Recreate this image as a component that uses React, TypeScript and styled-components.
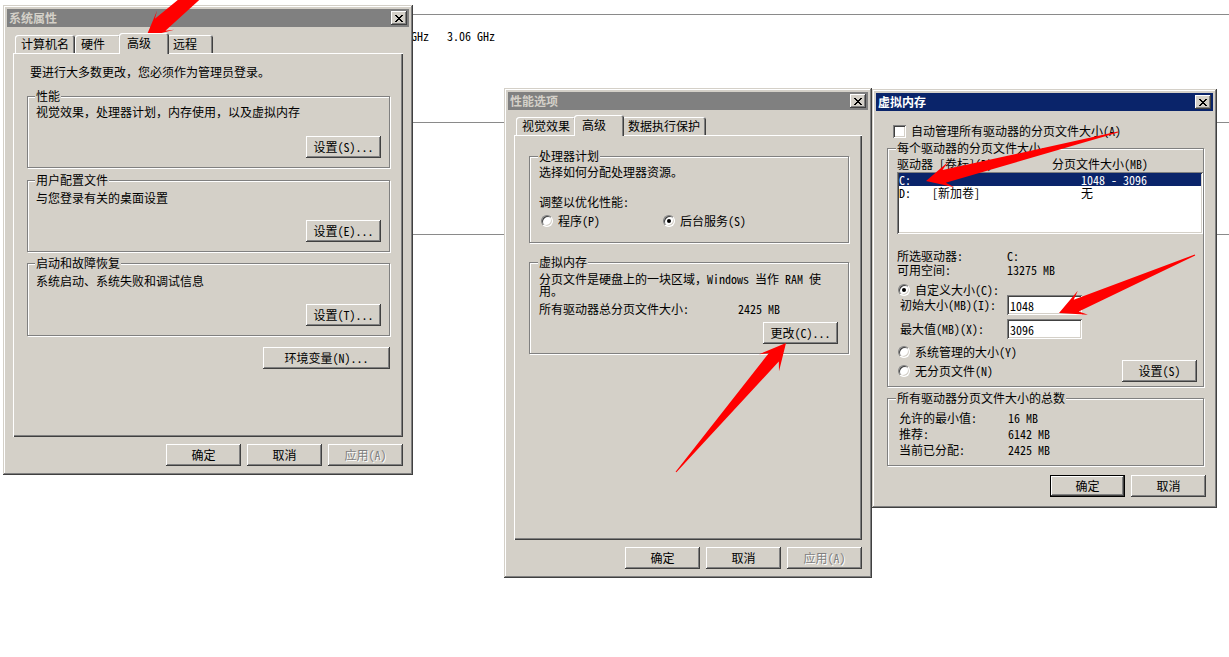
import React from 'react';
import styled, { createGlobalStyle, css } from 'styled-components';

const FACE = '#d4d0c8';
const SHADOW = '#808080';
const DARK = '#404040';
const NAVY = '#0a246a';
const FONT = `"Noto Sans Mono CJK SC", "Noto Sans CJK SC", "DejaVu Sans", sans-serif`;

const GlobalStyle = createGlobalStyle`
  html, body {
    margin: 0;
    padding: 0;
    background: #fff;
  }
  body {
    font-family: ${FONT};
    font-size: 12px;
    line-height: 14px;
    color: #000;
  }
  * {
    box-sizing: border-box;
  }
`;

const Desktop = styled.div`
  position: relative;
  width: 1229px;
  height: 657px;
  overflow: hidden;
  background: #fff;
`;

// page that lies behind the dialogs
const Backdrop = styled.div`
  display: flex;
  flex-direction: column;
  padding-top: 14px;
`;

const Rule = styled.div<{ $top: number; $left: number }>`
  height: 1px;
  margin-top: ${p => p.$top}px;
  margin-left: ${p => p.$left}px;
  background: #8a8a8a;
`;

const SpecText = styled.div`
  margin: 14px 0 0 411px;
  white-space: pre;
`;

const Window = styled.section<{ $x: number; $y: number; $w: number; $h: number }>`
  position: absolute;
  left: ${p => p.$x}px;
  top: ${p => p.$y}px;
  width: ${p => p.$w}px;
  height: ${p => p.$h}px;
  padding: 4px;
  display: flex;
  flex-direction: column;
  background: ${FACE};
  box-shadow: inset -1px -1px ${DARK}, inset 1px 1px ${FACE}, inset -2px -2px ${SHADOW}, inset 2px 2px #fff;
`;

const TitleBar = styled.header<{ $active?: boolean }>`
  height: 18px;
  flex: none;
  display: flex;
  align-items: center;
  justify-content: space-between;
  padding: 0 2px 0 2px;
  background: ${p => (p.$active ? NAVY : SHADOW)};
  color: ${p => (p.$active ? '#fff' : FACE)};
  font-weight: bold;
`;

const CloseButton = styled.span`
  width: 16px;
  height: 14px;
  display: flex;
  align-items: center;
  justify-content: center;
  background: ${FACE};
  box-shadow: inset -1px -1px ${DARK}, inset 1px 1px #fff, inset -2px -2px ${SHADOW}, inset 2px 2px ${FACE};
`;

const WindowBody = styled.div<{ $pad: string }>`
  flex: 1;
  display: flex;
  flex-direction: column;
  padding: ${p => p.$pad};
`;

const TabStrip = styled.div`
  height: 20px;
  flex: none;
  display: flex;
  align-items: flex-end;
  padding-left: 2px;
  position: relative;
  z-index: 1;
`;

const Tab = styled.div<{ $selected?: boolean }>`
  min-width: 46px;
  height: 18px;
  padding: 2px 6px 0;
  background: ${FACE};
  border-radius: 3px 3px 0 0;
  white-space: nowrap;
  box-shadow: inset 1px 1px #fff, inset -1px 0 ${DARK}, inset -2px 0 ${SHADOW};
  ${p =>
    p.$selected &&
    css`
      min-width: 50px;
      height: 21px;
      margin: 0 -2px -1px;
      padding: 3px 8px 0;
      position: relative;
      z-index: 1;
    `}
`;

const TabPanel = styled.div<{ $pad: string }>`
  flex: 1;
  display: flex;
  flex-direction: column;
  padding: ${p => p.$pad};
  background: ${FACE};
  box-shadow: inset 1px 1px #fff, inset -1px -1px ${DARK}, inset -2px -2px ${SHADOW};
`;

const Line = styled.div<{ $mt?: number; $ml?: number; $lh?: number }>`
  margin-top: ${p => p.$mt ?? 0}px;
  margin-left: ${p => p.$ml ?? 0}px;
  line-height: ${p => p.$lh ?? 14}px;
  white-space: nowrap;
`;

const Group = styled.fieldset<{ $mt?: number; $mr?: number; $pad: string }>`
  margin: ${p => p.$mt ?? 0}px ${p => p.$mr ?? 0}px 0 0;
  padding: ${p => p.$pad};
  min-width: 0;
  display: flex;
  flex-direction: column;
  border: 1px solid ${SHADOW};
  box-shadow: inset 1px 1px #fff, 1px 1px #fff;
`;

const Legend = styled.legend`
  padding: 0 1px;
  margin-left: -1px;
  line-height: 14px;
  background: ${FACE};
`;

const Actions = styled.div<{ $mt?: number; $pr?: number; $grow?: boolean }>`
  display: flex;
  justify-content: flex-end;
  align-items: center;
  gap: 6px;
  flex: ${p => (p.$grow ? 1 : 'none')};
  margin-top: ${p => p.$mt ?? 0}px;
  padding-right: ${p => p.$pr ?? 0}px;
`;

const Button = styled.button<{ $w?: number; $default?: boolean }>`
  width: ${p => p.$w ?? 75}px;
  height: 22px;
  flex: none;
  padding: 0;
  border: none;
  font: inherit;
  line-height: 14px;
  color: #000;
  background: ${FACE};
  box-shadow: inset -1px -1px ${DARK}, inset 1px 1px #fff, inset -2px -2px ${SHADOW}, inset 2px 2px ${FACE};
  ${p =>
    p.$default &&
    css`
      border: 1px solid #000;
    `}
  &:disabled {
    color: ${SHADOW};
    text-shadow: 1px 1px #fff;
  }
`;

const Footer = styled.div<{ $mt: number }>`
  display: flex;
  justify-content: flex-end;
  gap: 6px;
  margin-top: ${p => p.$mt}px;
`;

const Option = styled.label<{ $w?: number; $ml?: number }>`
  display: inline-flex;
  align-items: center;
  gap: 5px;
  width: ${p => (p.$w ? `${p.$w}px` : 'auto')};
  margin-left: ${p => p.$ml ?? 0}px;
  white-space: nowrap;
`;

const OptionRow = styled.div<{ $mt?: number; $h?: number }>`
  display: flex;
  align-items: center;
  height: ${p => p.$h ?? 14}px;
  margin-top: ${p => p.$mt ?? 0}px;
`;

const Radio = styled.span<{ $checked?: boolean }>`
  position: relative;
  width: 12px;
  height: 12px;
  flex: none;
  border-radius: 50%;
  background: #fff;
  border: 1px solid;
  border-color: ${SHADOW} #fff #fff ${SHADOW};
  box-shadow: inset 1px 1px ${DARK}, inset -1px -1px ${FACE};
  ${p =>
    p.$checked &&
    css`
      &::after {
        content: '';
        position: absolute;
        left: 3px;
        top: 3px;
        width: 4px;
        height: 4px;
        border-radius: 50%;
        background: #000;
      }
    `}
`;

const Checkbox = styled.span`
  width: 13px;
  height: 13px;
  flex: none;
  background: #fff;
  box-shadow: inset 1px 1px ${SHADOW}, inset -1px -1px #fff, inset 2px 2px ${DARK}, inset -2px -2px ${FACE};
`;

const InfoGrid = styled.div<{ $label: number; $mt?: number; $ml?: number; $lh?: number }>`
  display: grid;
  grid-template-columns: ${p => p.$label}px auto;
  margin-top: ${p => p.$mt ?? 0}px;
  margin-left: ${p => p.$ml ?? 0}px;
  line-height: ${p => p.$lh ?? 14}px;
  white-space: nowrap;
`;

const FieldRow = styled.div<{ $mt: number }>`
  display: grid;
  grid-template-columns: 107px 75px;
  align-items: center;
  height: 20px;
  margin-top: ${p => p.$mt}px;
  padding-left: 3px;
`;

const TextInput = styled.input`
  width: 75px;
  height: 20px;
  padding: 0 3px;
  border: none;
  outline: none;
  font: inherit;
  color: #000;
  background: #fff;
  box-shadow: inset 1px 1px ${SHADOW}, inset -1px -1px #fff, inset 2px 2px ${DARK}, inset -2px -2px ${FACE};
`;

const ListHeader = styled.div`
  display: grid;
  grid-template-columns: 155px auto;
  margin-top: 2px;
  white-space: nowrap;
`;

const ListBox = styled.div`
  height: 62px;
  margin-top: 1px;
  padding: 1px 2px;
  background: #fff;
  box-shadow: inset 1px 1px ${SHADOW}, inset -1px -1px #fff, inset 2px 2px ${DARK}, inset -2px -2px ${FACE};
`;

const ListRow = styled.div<{ $selected?: boolean }>`
  display: grid;
  grid-template-columns: 33px 149px auto;
  height: 13px;
  line-height: 13px;
  white-space: nowrap;
  background: ${p => (p.$selected ? NAVY : 'transparent')};
  color: ${p => (p.$selected ? '#fff' : '#000')};
`;

const ArrowLayer = styled.svg`
  position: absolute;
  left: 0;
  top: 0;
  width: 1229px;
  height: 657px;
  pointer-events: none;
`;

const CloseIcon = () => (
  <svg width="8" height="7" viewBox="0 0 8 7" shapeRendering="crispEdges">
    <path
      fill="#000"
      d="M0 0h2v1H0zM6 0h2v1H6zM1 1h2v1H1zM5 1h2v1H5zM2 2h4v1H2zM3 3h2v1H3zM2 4h4v1H2zM1 5h2v1H1zM5 5h2v1H5zM0 6h2v1H0zM6 6h2v1H6z"
    />
  </svg>
);

// tail x, tail y, tip x, tip y, neck half width
const ARROWS: number[][] = [
  [373, -159, 146, 37, 8],
  [676, 472, 786, 343, 6.5],
  [1118, 132, 926, 181, 6.5],
  [1195, 255, 1059, 313, 6.5],
];

const arrowPoints = ([x0, y0, x1, y1, neck]: number[]) => {
  const len = Math.hypot(x1 - x0, y1 - y0);
  const ux = (x1 - x0) / len;
  const uy = (y1 - y0) / len;
  const head = 26;
  const barb = 13;
  const at = (t: number, s: number) =>
    `${(x0 + ux * t - uy * s).toFixed(1)},${(y0 + uy * t + ux * s).toFixed(1)}`;
  return [
    at(0, 0.5),
    at(len - head * 0.72, neck),
    at(len - head, barb),
    at(len, 0),
    at(len - head, -barb),
    at(len - head * 0.72, -neck),
    at(0, -0.5),
  ].join(' ');
};

export default function App() {
  return (
    <>
      <GlobalStyle />
      <Desktop>
        <Backdrop>
          <Rule $top={0} $left={407} />
          <SpecText>GHz   3.06 GHz</SpecText>
          <Rule $top={79} $left={400} />
          <Rule $top={111} $left={400} />
        </Backdrop>

        <Window $x={3} $y={5} $w={410} $h={470}>
          <TitleBar>
            <span>系统属性</span>
            <CloseButton>
              <CloseIcon />
            </CloseButton>
          </TitleBar>
          <WindowBody $pad="6px 6px 5px 6px">
            <TabStrip>
              <Tab>计算机名</Tab>
              <Tab>硬件</Tab>
              <Tab $selected>高级</Tab>
              <Tab>远程</Tab>
            </TabStrip>
            <TabPanel $pad="12px 13px 0 14px">
              <Line $ml={3}>要进行大多数更改，您必须作为管理员登录。</Line>
              <Group $mt={10} $pad="2px 8px 9px 8px">
                <Legend>性能</Legend>
                <Line>视觉效果，处理器计划，内存使用，以及虚拟内存</Line>
                <Actions $mt={17}>
                  <Button>设置(S)...</Button>
                </Actions>
              </Group>
              <Group $mt={5} $pad="4px 8px 9px 8px">
                <Legend>用户配置文件</Legend>
                <Line>与您登录有关的桌面设置</Line>
                <Actions $mt={15}>
                  <Button>设置(E)...</Button>
                </Actions>
              </Group>
              <Group $mt={4} $pad="4px 8px 9px 8px">
                <Legend>启动和故障恢复</Legend>
                <Line>系统启动、系统失败和调试信息</Line>
                <Actions $mt={16}>
                  <Button>设置(T)...</Button>
                </Actions>
              </Group>
              <Actions $mt={11}>
                <Button $w={127}>环境变量(N)...</Button>
              </Actions>
            </TabPanel>
            <Footer $mt={7}>
              <Button>确定</Button>
              <Button>取消</Button>
              <Button disabled>应用(A)</Button>
            </Footer>
          </WindowBody>
        </Window>

        <Window $x={504} $y={88} $w={368} $h={490}>
          <TitleBar>
            <span>性能选项</span>
            <CloseButton>
              <CloseIcon />
            </CloseButton>
          </TitleBar>
          <WindowBody $pad="5px 6px 5px 6px">
            <TabStrip>
              <Tab>视觉效果</Tab>
              <Tab $selected>高级</Tab>
              <Tab>数据执行保护</Tab>
            </TabStrip>
            <TabPanel $pad="14px 13px 0 15px">
              <Group $pad="2px 9px 14px 9px">
                <Legend>处理器计划</Legend>
                <Line>选择如何分配处理器资源。</Line>
                <Line $mt={16}>调整以优化性能:</Line>
                <OptionRow $mt={5}>
                  <Option $w={122} $ml={2}>
                    <Radio />
                    程序(P)
                  </Option>
                  <Option>
                    <Radio $checked />
                    后台服务(S)
                  </Option>
                </OptionRow>
              </Group>
              <Group $mt={12} $pad="4px 10px 9px 9px">
                <Legend>虚拟内存</Legend>
                <Line $lh={12}>
                  分页文件是硬盘上的一块区域，Windows 当作 RAM 使
                  <br />
                  用。
                </Line>
                <InfoGrid $label={199} $mt={5}>
                  <span>所有驱动器总分页文件大小:</span>
                  <span>2425 MB</span>
                </InfoGrid>
                <Actions $mt={6}>
                  <Button>更改(C)...</Button>
                </Actions>
              </Group>
            </TabPanel>
            <Footer $mt={7}>
              <Button>确定</Button>
              <Button>取消</Button>
              <Button disabled>应用(A)</Button>
            </Footer>
          </WindowBody>
        </Window>

        <Window $x={872} $y={89} $w={345} $h={419}>
          <TitleBar $active>
            <span>虚拟内存</span>
            <CloseButton>
              <CloseIcon />
            </CloseButton>
          </TitleBar>
          <WindowBody $pad="13px 7px 7px 11px">
            <OptionRow>
              <Option $ml={6}>
                <Checkbox />
                自动管理所有驱动器的分页文件大小(A)
              </Option>
            </OptionRow>
            <Group $mt={3} $mr={2} $pad="0 0 4px 9px">
              <Legend>每个驱动器的分页文件大小</Legend>
              <ListHeader>
                <span>驱动器 [卷标](D)</span>
                <span>分页文件大小(MB)</span>
              </ListHeader>
              <ListBox>
                <ListRow $selected>
                  <span>C:</span>
                  <span />
                  <span>1048 - 3096</span>
                </ListRow>
                <ListRow>
                  <span>D:</span>
                  <span>[新加卷]</span>
                  <span>无</span>
                </ListRow>
              </ListBox>
              <InfoGrid $label={110} $mt={15}>
                <span>所选驱动器:</span>
                <span>C:</span>
                <span>可用空间:</span>
                <span>13275 MB</span>
              </InfoGrid>
              <OptionRow $mt={6}>
                <Option $ml={1}>
                  <Radio $checked />
                  自定义大小(C):
                </Option>
              </OptionRow>
              <FieldRow $mt={-2}>
                <span>初始大小(MB)(I):</span>
                <TextInput readOnly value="1048" />
              </FieldRow>
              <FieldRow $mt={4}>
                <span>最大值(MB)(X):</span>
                <TextInput readOnly value="3096" />
              </FieldRow>
              <OptionRow $mt={6}>
                <Option $ml={1}>
                  <Radio />
                  系统管理的大小(Y)
                </Option>
              </OptionRow>
              <OptionRow $mt={1} $h={22}>
                <Option $ml={1}>
                  <Radio />
                  无分页文件(N)
                </Option>
                <Actions $grow $pr={6}>
                  <Button>设置(S)</Button>
                </Actions>
              </OptionRow>
            </Group>
            <Group $mt={4} $mr={2} $pad="5px 8px 7px 9px">
              <Legend>所有驱动器分页文件大小的总数</Legend>
              <InfoGrid $label={109} $ml={2} $lh={16}>
                <span>允许的最小值:</span>
                <span>16 MB</span>
                <span>推荐:</span>
                <span>6142 MB</span>
                <span>当前已分配:</span>
                <span>2425 MB</span>
              </InfoGrid>
            </Group>
            <Footer $mt={9}>
              <Button $default>确定</Button>
              <Button>取消</Button>
            </Footer>
          </WindowBody>
        </Window>

        <ArrowLayer viewBox="0 0 1229 657">
          {ARROWS.map((a, i) => (
            <polygon key={i} points={arrowPoints(a)} fill="#ff0000" />
          ))}
        </ArrowLayer>
      </Desktop>
    </>
  );
}
